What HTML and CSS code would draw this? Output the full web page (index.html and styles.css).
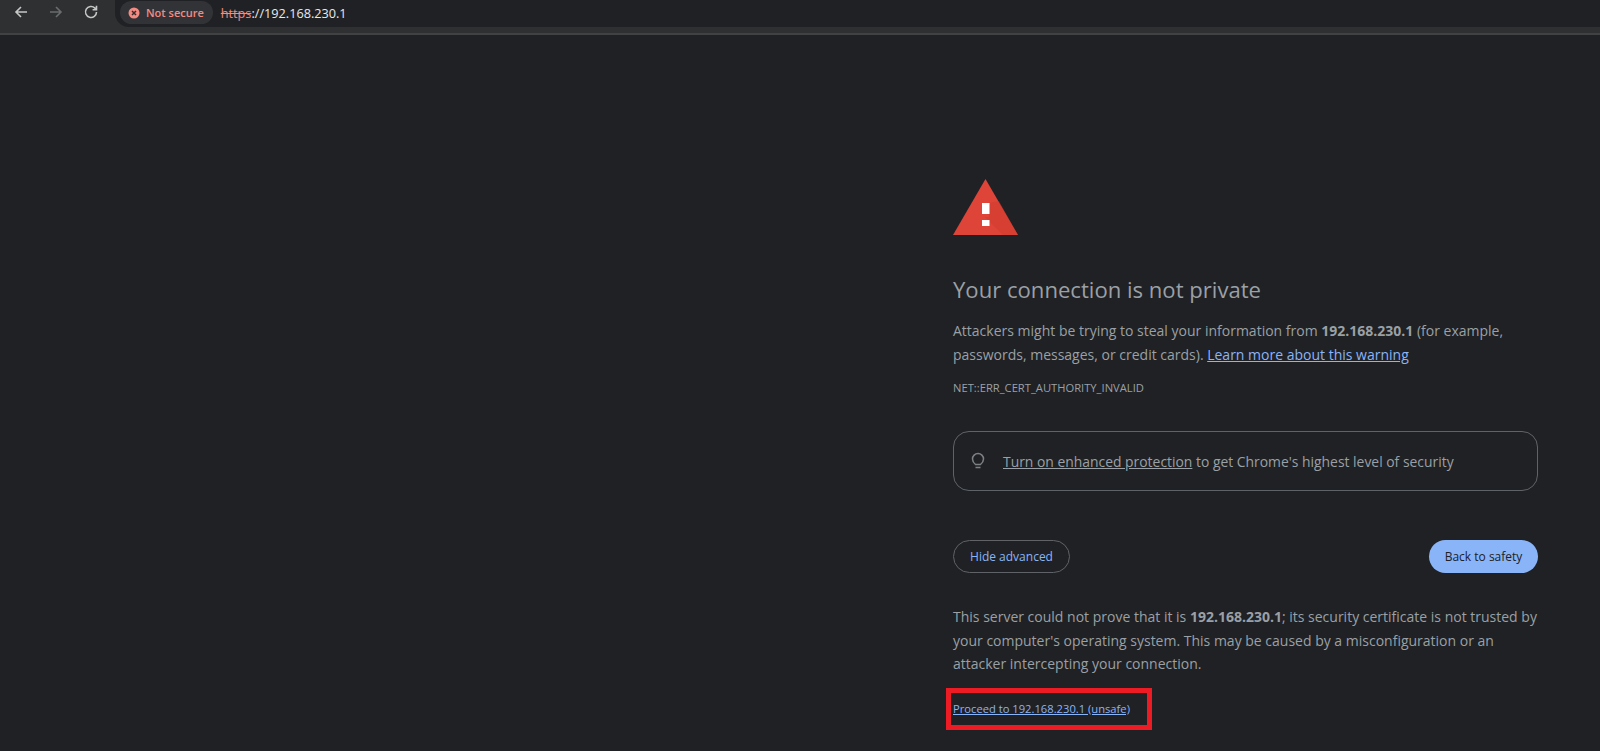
FILE: index.html
```html
<!DOCTYPE html>
<html lang="en">
<head>
<meta charset="utf-8">
<title>Privacy error</title>
<link rel="stylesheet" href="styles.css">
</head>
<body>
<header class="toolbar">
  <svg class="nav" viewBox="0 0 16 16"><path d="M14 8H3M8 3 3 8l5 5"/></svg>
  <svg class="nav dim" viewBox="0 0 16 16"><path d="M2 8h11M8 3l5 5-5 5"/></svg>
  <svg class="nav" viewBox="0 0 16 16"><path d="M13.5 8a5.500 5.500 0 1 1-1.600-3.900L13.500 5.700M13.500 1.800v3.900H9.600"/></svg>
  <div class="omnibox">
    <div class="chip">
      <svg class="chip-icon" viewBox="0 0 12 12"><circle cx="6" cy="6" r="5.500"/><path d="M4 4l4 4M8 4l-4 4"/></svg>
      <span>Not secure</span>
    </div>
    <div class="url"><span class="scheme">https</span>://192.168.230.1</div>
  </div>
</header>
<main class="page">
  <section class="content">
    <svg class="warn" viewBox="0 0 65 56">
      <path class="warn-tri" d="M32.500 0 65 56H0z"/>
      <path class="warn-shade" d="M36 24v14h-4l18 18h15L46 22z"/>
      <path class="warn-mark" d="M29 24h7.500v11H29zM29 41h7.500v6H29z"/>
    </svg>
    <h1>Your connection is not private</h1>
    <p class="lead">Attackers might be trying to steal your information from <strong>192.168.230.1</strong> (for example, passwords, messages, or credit cards). <a href="#">Learn more about this warning</a></p>
    <div class="code">NET::ERR_CERT_AUTHORITY_INVALID</div>
    <div class="card">
      <svg class="bulb" viewBox="0 0 14 18"><path d="M4.500 12.500C3 11.300 1.500 9.800 1.500 7a5.500 5.500 0 0 1 11 0c0 2.800-1.500 4.300-3 5.500z"/><path d="M4.500 15.500h5"/></svg>
      <span><a class="muted-link" href="#">Turn on enhanced protection</a> to get Chrome's highest level of security</span>
    </div>
    <div class="actions">
      <button class="btn outline">Hide advanced</button>
      <button class="btn solid">Back to safety</button>
    </div>
    <p class="details">This server could not prove that it is <strong>192.168.230.1</strong>; its security certificate is not trusted by your computer's operating system. This may be caused by a misconfiguration or an attacker intercepting your connection.</p>
    <p class="proceed"><a href="#">Proceed to 192.168.230.1 (unsafe)</a></p>
  </section>
</main>
</body>
</html>
```
FILE: styles.css
```css
*, *::before { box-sizing: border-box; }
html, body { margin: 0; height: 100%; }
body {
  background: #202124;
  color: #9aa0a6;
  font-family: "Open Sans", "Noto Sans", sans-serif;
  overflow: hidden;
}
.toolbar {
  display: flex;
  align-items: flex-start;
  height: 35px;
  padding-left: 13px;
  gap: 19px;
  background: #2f3032;
  border-bottom: 2px solid #414244;
}
.nav {
  width: 16px;
  height: 16px;
  margin-top: 4px;
  flex: none;
  fill: none;
  stroke: #c4c7c5;
  stroke-width: 1.600;
}
.nav.dim { stroke: #6a6c6e; }
.omnibox {
  display: flex;
  align-items: center;
  height: 27px;
  margin-left: -3px;
  padding: 0 0 2px 5px;
  flex: 1;
  background: #202124;
  border-radius: 0 0 0 14px;
}
.chip {
  display: flex;
  align-items: center;
  gap: 6px;
  height: 23px;
  padding: 0 9px 0 8px;
  background: #323336;
  border-radius: 12px;
  color: #f28b82;
  font-size: 11px;
  font-weight: 600;
}
.chip-icon { width: 12px; height: 12px; }
.chip-icon circle { fill: #f28b82; }
.chip-icon path { stroke: #3a2a2a; stroke-width: 1.500; }
.url { margin-left: 8px; color: #e8eaed; font-size: 12.700px; }
.scheme { color: #f28b82; text-decoration: line-through; }
.page { padding-left: 953px; }
.content { width: 585px; padding-top: 144px; }
.warn { display: block; width: 65px; height: 56px; }
.warn-tri { fill: #de4437; }
.warn-shade { fill: #c9362b; opacity: .35; }
.warn-mark { fill: #fff; }
h1 {
  margin: 38px 0 0;
  color: #9aa0a6;
  font-size: 22.100px;
  font-weight: 400;
  line-height: 32px;
}
p { margin: 0; }
.lead, .details { font-size: 14px; line-height: 23.500px; }
.lead { margin-top: 14px; }
.lead strong, .details strong { font-weight: 700; }
a { color: #8ab4f8; }
.code { margin-top: 14px; font-size: 11.200px; line-height: 16px; }
.card {
  display: flex;
  align-items: center;
  gap: 18px;
  height: 60px;
  margin-top: 35px;
  padding: 0 17px;
  border: 1px solid #5f6368;
  border-radius: 16px;
  font-size: 13.900px;
}
.bulb { width: 14px; height: 18px; flex: none; fill: none; stroke: #7d8185; stroke-width: 1.500; }
.muted-link { color: #9aa0a6; }
.actions {
  display: flex;
  justify-content: space-between;
  align-items: flex-start;
  margin-top: 49px;
}
.btn {
  height: 33px;
  border-radius: 17px;
  font-family: inherit;
  font-size: 12px;
}
.outline { width: 117px; background: transparent; border: 1px solid #5f6368; color: #8ab4f8; }
.solid { width: 109px; background: #8ab4f8; border: 0; color: #202124; }
.details { margin-top: 32px; }
.proceed { position: relative; margin-top: 23px; font-size: 11.200px; line-height: 20px; }
.proceed::before {
  content: "";
  position: absolute;
  left: -7px;
  top: -11px;
  width: 206px;
  height: 42px;
  border: 5px solid #ed1c24;
}
```
